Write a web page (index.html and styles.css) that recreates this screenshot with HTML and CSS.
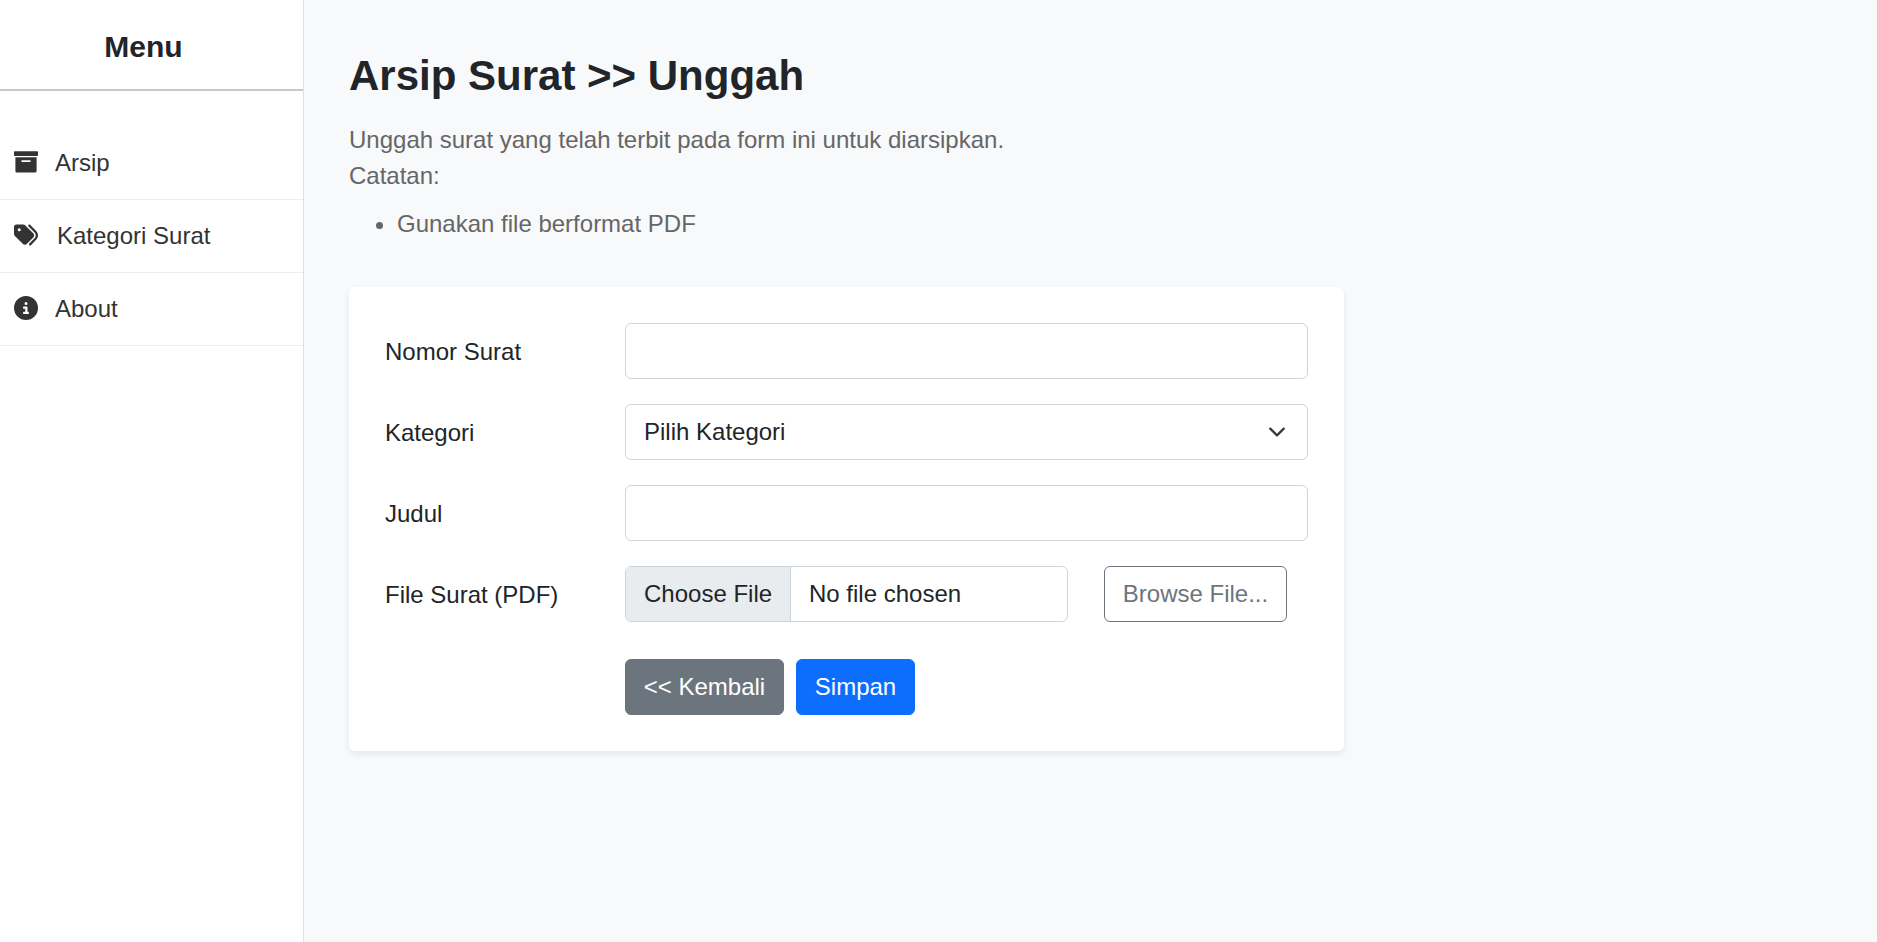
FILE: index.html
```html
<!DOCTYPE html>
<html lang="id">
<head>
<meta charset="utf-8">
<title>Arsip Surat</title>
<link rel="stylesheet" href="styles.css">
</head>
<body>
<aside class="sidebar">
  <h4 class="sidebar-title">Menu</h4>
  <nav class="menu">
    <a class="menu-item" href="#"><svg class="icon" viewBox="0 0 24 24"><path d="M.8 1.300H23.200a.8.8 0 0 1 .8.8V5.300a.6.6 0 0 1-.6.6H.6a.6.6 0 0 1-.6-.6V2.100a.8.8 0 0 1 .8-.8zM1.400 7.300H22.600V21a1.500 1.500 0 0 1-1.500 1.500H2.900A1.500 1.500 0 0 1 1.400 21zM8 10.200a.6.6 0 0 0-.6.6v.6a.6.6 0 0 0 .6.6h8a.6.6 0 0 0 .6-.6v-.6a.6.6 0 0 0-.6-.6z" fill-rule="evenodd"/></svg>Arsip</a>
    <a class="menu-item tags" href="#"><svg class="icon" viewBox="0 0 512 512"><path d="M345 39.100L472.800 168.400c52.400 53 52.400 138.200 0 191.200L360.800 472.900c-9.300 9.400-24.500 9.500-33.900 .2s-9.500-24.500-.2-33.900L438.600 325.900c33.900-34.300 33.900-89.400 0-123.700L310.900 72.900c-9.300-9.400-9.200-24.600 .2-33.900s24.600-9.200 33.900 .2zM0 229.500V80C0 53.500 21.500 32 48 32H197.500c17 0 33.300 6.700 45.300 18.700l168 168c25 25 25 65.500 0 90.500L277.300 442.700c-25 25-65.500 25-90.500 0l-168-168C6.700 262.700 0 246.500 0 229.500zM144 144a32 32 0 1 0 -64 0 32 32 0 1 0 64 0z"/></svg>Kategori Surat</a>
    <a class="menu-item" href="#"><svg class="icon" viewBox="0 0 512 512"><path d="M256 512A256 256 0 1 0 256 0a256 256 0 1 0 0 512zM216 336h24V272H216c-13.300 0-24-10.700-24-24s10.700-24 24-24h48c13.300 0 24 10.700 24 24v88h8c13.300 0 24 10.700 24 24s-10.700 24-24 24H216c-13.300 0-24-10.700-24-24s10.700-24 24-24zm40-208a32 32 0 1 1 0 64 32 32 0 1 1 0-64z"/></svg>About</a>
  </nav>
</aside>
<main class="content">
  <h1 class="page-title">Arsip Surat &gt;&gt; Unggah</h1>
  <div class="description">
    Unggah surat yang telah terbit pada form ini untuk diarsipkan.<br>Catatan:
    <ul class="notes"><li>Gunakan file berformat PDF</li></ul>
  </div>
  <form class="card">
    <div class="row"><label class="label">Nomor Surat</label><div class="control wide"></div></div>
    <div class="row"><label class="label">Kategori</label>
      <div class="control wide select"><span>Pilih Kategori</span><svg class="chevron" viewBox="0 0 16 16"><path d="m2 5 6 6 6-6"/></svg></div></div>
    <div class="row"><label class="label">Judul</label><div class="control wide"></div></div>
    <div class="row"><label class="label">File Surat (PDF)</label>
      <div class="control file"><span class="file-button">Choose File</span><span class="file-name">No file chosen</span></div>
      <button class="btn btn-outline" type="button">Browse File...</button></div>
    <div class="actions"><button class="btn btn-secondary" type="button">&lt;&lt; Kembali</button><button class="btn btn-primary" type="button">Simpan</button></div>
  </form>
</main>
</body>
</html>
```
FILE: styles.css
```css
* { box-sizing: border-box; }
body {
  margin: 0;
  display: flex;
  height: 942px;
  overflow: hidden;
  background: #f8f9fb;
  color: #212529;
  font: 24px/36px "Liberation Sans", Arial, sans-serif;
}
.sidebar {
  width: 304px;
  flex: none;
  background: #fff;
  border-right: 1px solid #dee2e6;
}
.sidebar-title {
  margin: 0 0 36px;
  height: 91px;
  padding: 29px 16px 0 0;
  border-bottom: 2px solid #c8c8c8;
  font-size: 30px;
  font-weight: bold;
  text-align: center;
}
.menu-item {
  display: flex;
  align-items: center;
  height: 73px;
  padding-left: 14px;
  border-bottom: 1px solid #eee;
  color: #333;
  text-decoration: none;
}
.icon {
  width: 24px;
  height: 24px;
  margin: 0 17px 2px 0;
  fill: currentColor;
}
.tags .icon { margin-right: 19px; }
.content { padding: 51px 45px; }
.page-title {
  margin: 0 0 21px;
  font-size: 42px;
  line-height: 50px;
}
.description { color: #666; }
.notes {
  margin: 12px 0 45px;
  padding-left: 48px;
}
.card {
  width: 995px;
  height: 464px;
  padding: 36px;
  background: #fff;
  border-radius: 6px;
  box-shadow: 0 3px 6px rgba(0, 0, 0, .075);
}
.row {
  display: flex;
  height: 56px;
  margin-bottom: 25px;
}
.label {
  width: 240px;
  flex: none;
  padding-top: 11px;
}
.control {
  display: flex;
  height: 56px;
  border: 1px solid #ced4da;
  border-radius: 6px;
  line-height: 54px;
  background: #fff;
  overflow: hidden;
}
.wide { width: 683px; }
.select {
  justify-content: space-between;
  align-items: center;
  padding: 0 21px 0 18px;
}
.chevron {
  width: 18px;
  height: 18px;
  fill: none;
  stroke: #343a40;
  stroke-width: 2;
  stroke-linecap: round;
  stroke-linejoin: round;
}
.file { width: 443px; }
.file-button {
  width: 165px;
  padding-left: 18px;
  background: #e9ecef;
  border-right: 1px solid #ced4da;
}
.file-name { padding-left: 18px; }
.btn {
  height: 56px;
  padding: 0;
  border: 1px solid;
  border-radius: 6px;
  font: inherit;
}
.btn-outline {
  width: 183px;
  margin-left: 36px;
  background: #fff;
  border-color: #6c757d;
  color: #6c757d;
}
.actions {
  display: flex;
  gap: 12px;
  margin: 37px 0 0 240px;
}
.btn-secondary {
  width: 159px;
  background: #6c757d;
  border-color: #6c757d;
  color: #fff;
}
.btn-primary {
  width: 119px;
  background: #0d6efd;
  border-color: #0d6efd;
  color: #fff;
}
```
